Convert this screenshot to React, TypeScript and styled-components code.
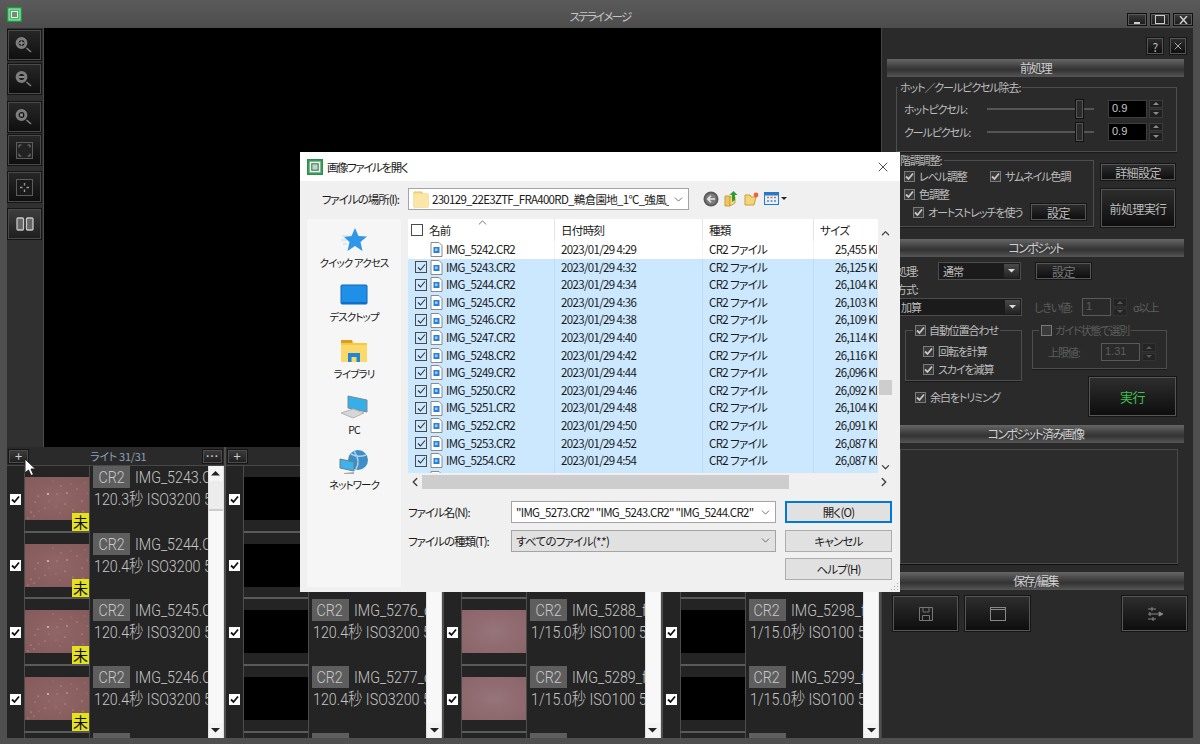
import React from 'react';
import styled, { createGlobalStyle } from 'styled-components';
import { ChevronDown, ChevronLeft, ChevronRight, ChevronUp, X } from 'lucide-react';

const JP = `"Noto Sans CJK JP", "Liberation Sans", sans-serif`;
const THIN = `Roboto, "Noto Sans CJK JP", "Liberation Sans", sans-serif`;

const Global = createGlobalStyle`
  html, body {
    margin: 0;
    width: 1200px;
    height: 744px;
    overflow: hidden;
    background: #4f4f4f;
    font-family: ${JP};
    font-feature-settings: 'palt';
  }
  * { box-sizing: border-box; }
`;

const Window = styled.div`
  position: relative;
  width: 1200px;
  height: 744px;
  background: #4f4f4f;
  display: flex;
  flex-direction: column;
`;

/* ---------- title bar ---------- */

const TitleBar = styled.div`
  height: 28px;
  display: grid;
  grid-template-columns: 1fr auto 1fr;
  background: linear-gradient(#5b5b5b, #4d4d4d);
`;

const AppIcon = styled.svg`
  width: 15px;
  height: 15px;
  margin: 7px 0 0 7px;
`;

const TitleText = styled.div`
  color: #c4c4c4;
  font-size: 11.5px;
  letter-spacing: -1.8px;
  line-height: 33px;
`;

const WinButtons = styled.div`
  display: flex;
  justify-content: flex-end;
  align-items: flex-start;
  gap: 3px;
  padding: 13px 7px 0 0;
`;

const WinButton = styled.div`
  width: 20px;
  height: 13px;
  background: linear-gradient(#3a3a3a, #1c1c1c);
  border: 1px solid #111;
  box-shadow: inset 0 0 0 1px #5a5a5a;
  display: flex;
  align-items: center;
  justify-content: center;
`;

/* ---------- main ---------- */

const Body = styled.div`
  flex: 1;
  display: flex;
  padding: 0 7px 6px 7px;
  min-height: 0;
`;

const LeftColumn = styled.div`
  width: 874px;
  display: flex;
  flex-direction: column;
`;

const ViewerRow = styled.div`
  height: 419px;
  display: flex;
`;

const Toolbar = styled.div`
  width: 37px;
  background: #303030;
  border-right: 1px solid #4a4a4a;
  padding: 1px 0 0 0;
  display: flex;
  flex-direction: column;
`;

const ToolButton = styled.div<{ $gap?: number; $lit?: boolean }>`
  width: 35px;
  height: 32px;
  margin-top: ${(p) => p.$gap ?? 1}px;
  background: ${(p) => (p.$lit ? 'linear-gradient(#3e3e3e, #1e1e1e)' : 'linear-gradient(#282828, #0e0e0e)')};
  border: 1px solid #151515;
  box-shadow: inset 0 0 0 1px #4a4a4a;
  display: flex;
  align-items: center;
  justify-content: center;
`;

const Viewer = styled.div`
  flex: 1;
  background: #000;
`;

const ThumbGrid = styled.div`
  flex: 1;
  display: grid;
  grid-template-columns: repeat(4, 218.5px);
  min-height: 0;
`;

const ThumbColumn = styled.div`
  display: flex;
  flex-direction: column;
  min-width: 0;
  min-height: 0;
  padding-right: 2px;
`;

const ThumbHeader = styled.div`
  height: 18px;
  flex: none;
  background: #2a2a2a;
  display: flex;
  align-items: center;
  padding: 0 1px;
`;

const SmallButton = styled.div`
  width: 21px;
  height: 15px;
  background: linear-gradient(#3d3d3d, #1e1e1e);
  border: 1px solid #161616;
  box-shadow: inset 0 0 0 1px #4c4c4c;
  color: #d0d0d0;
  font-size: 13px;
  line-height: 12px;
  text-align: center;
`;

const ThumbTitle = styled.div`
  flex: 1;
  text-align: center;
  color: #8ea0b8;
  font-size: 11px;
  letter-spacing: -0.3px;
  padding-left: 6px;
`;

const ThumbBody = styled.div`
  flex: 1;
  min-height: 0;
  display: flex;
  background: #242424;
  overflow: hidden;
  border-top: 1px solid #484848;
`;

const ThumbList = styled.div`
  flex: 1;
  min-width: 0;
  overflow: hidden;
`;

const ThumbRow = styled.div`
  height: 66.67px;
  display: grid;
  grid-template-columns: 17px 66px 1fr;
`;

const CheckCell = styled.div`
  display: flex;
  align-items: center;
  justify-content: center;
`;

const WhiteCheck = styled.div`
  width: 11px;
  height: 11px;
  background: #fff;
  display: flex;
  align-items: center;
  justify-content: center;
`;

const ThumbCell = styled.div`
  position: relative;
  border-left: 1px solid #4c4c4c;
  border-right: 1px solid #4c4c4c;
  border-bottom: 2px solid #5a5a5a;
  padding-top: 11px;
`;

const ThumbImage = styled.svg<{ $bg: string }>`
  display: block;
  width: 64px;
  height: 43px;
  background: ${(p) => p.$bg};
`;

const Badge = styled.div`
  position: absolute;
  right: 0;
  bottom: 0;
  width: 17px;
  height: 18px;
  background: #e4e11f;
  color: #111;
  font-size: 15px;
  line-height: 18px;
  text-align: center;
`;

const ThumbInfo = styled.div`
  min-width: 0;
  overflow: hidden;
  padding-left: 3px;
  color: #c4c4c4;
  font-family: ${THIN};
  font-weight: 300;
  font-size: 17px;
  white-space: nowrap;
`;

const InfoTop = styled.div`
  display: flex;
  align-items: center;
  height: 22px;
  gap: 5px;
`;

const FileChip = styled.span`
  flex: none;
  width: 37px;
  height: 22px;
  background: #5e5e5e;
  color: #c8c8c8;
  text-align: center;
  line-height: 22px;
  & > span {
    transform-origin: center;
  }
`;

const ThinText = styled.span`
  display: inline-block;
  transform: scaleX(0.84);
  transform-origin: left center;
`;

const InfoBottom = styled.div`
  padding-left: 1px;
  line-height: 22px;
  height: 22px;
`;

const ThumbScroll = styled.div`
  width: 16px;
  flex: none;
  background: #f8f8f8;
  display: flex;
  flex-direction: column;
  border: 1px solid #e0e0e0;
  border-width: 0 1px;
`;

const ScrollArrow = styled.div`
  height: 15px;
  display: flex;
  align-items: center;
  justify-content: center;
  background: #f4f4f4;
  flex: none;
`;

const ScrollThumb = styled.div`
  height: 30px;
  background: #ececec;
  flex: none;
  border-bottom: 2px solid #ccc;
`;

const ScrollFill = styled.div`
  flex: 1;
`;

/* ---------- right panel ---------- */

const RightPanel = styled.div`
  width: 312px;
  background: #2a2a2a;
  border-left: 1px solid #454545;
  padding: 0 9px 0 5px;
  display: flex;
  flex-direction: column;
  color: #bdbdbd;
  font-size: 11px;
  letter-spacing: -1.1px;
`;

const PanelTop = styled.div`
  height: 31px;
  display: flex;
  justify-content: flex-end;
  align-items: flex-start;
  gap: 5px;
  padding-top: 9px;
  margin-right: -3px;
`;

const DarkButton = styled.div<{ $w?: number; $h?: number; $color?: string; $size?: number }>`
  width: ${(p) => (p.$w ? `${p.$w}px` : 'auto')};
  height: ${(p) => p.$h ?? 18}px;
  flex: none;
  background: linear-gradient(#2e2e2e, #0d0d0d);
  border: 1px solid #161616;
  box-shadow: inset 0 0 0 1px #565656;
  color: ${(p) => p.$color ?? '#bdbdbd'};
  font-size: ${(p) => p.$size ?? 12}px;
  letter-spacing: -0.6px;
  display: flex;
  align-items: center;
  justify-content: center;
`;

const SectionHead = styled.div`
  height: 18px;
  flex: none;
  background: linear-gradient(#666 0%, #3e3e3e 45%, #333 60%, #565656 100%);
  color: #cfcfcf;
  font-size: 12px;
  letter-spacing: -1.6px;
  line-height: 18px;
  text-align: center;
`;

const Group = styled.fieldset<{ $w?: number; $h?: number }>`
  margin: 0;
  padding: 0;
  min-width: 0;
  width: ${(p) => (p.$w ? `${p.$w}px` : 'auto')};
  height: ${(p) => (p.$h ? `${p.$h}px` : 'auto')};
  border: 1px solid #4e4e4e;
  box-shadow: 0 1px 0 #1a1a1a;
`;

const GroupLegend = styled.legend<{ $ml: number }>`
  margin-left: ${(p) => p.$ml}px;
  padding: 0 2px;
  font-size: 11px;
  line-height: 14px;
  white-space: nowrap;
  display: flex;
  align-items: center;
  gap: 3px;
`;

const HotGroup = styled(Group)`
  margin: 3px 0 0 9px;
  padding: 3px 0 0 7px;
`;

const SliderRow = styled.div`
  display: flex;
  align-items: center;
  height: 23px;
`;

const SliderLabel = styled.div`
  width: 83px;
  flex: none;
`;

const SliderTrack = styled.div`
  position: relative;
  width: 107px;
  height: 2px;
  margin-right: 14px;
  background: #555;
  flex: none;
`;

const SliderThumb = styled.div<{ $pos: number }>`
  position: absolute;
  top: -9px;
  left: ${(p) => p.$pos}px;
  width: 9px;
  height: 20px;
  background: #2b2b2b;
  border: 1px solid #111;
  box-shadow: inset 0 0 0 1px #555;
`;

const NumberBox = styled.div<{ $w: number; $dim?: boolean }>`
  width: ${(p) => p.$w}px;
  height: 18px;
  flex: none;
  background: ${(p) => (p.$dim ? '#2a2a2a' : '#000')};
  border: 1px solid ${(p) => (p.$dim ? '#5a5a5a' : '#3e3e3e')};
  color: ${(p) => (p.$dim ? '#5e5e5e' : '#c8c8c8')};
  font-size: 11px;
  letter-spacing: 0;
  line-height: 15px;
  padding-left: 3px;
  font-family: 'Liberation Sans', sans-serif;
`;

const Spinner = styled.div<{ $dim?: boolean }>`
  width: 14px;
  height: 18px;
  margin-left: 2px;
  flex: none;
  display: flex;
  flex-direction: column;
  gap: 1px;
  opacity: ${(p) => (p.$dim ? 0.45 : 1)};
`;

const SpinPart = styled.div`
  flex: 1;
  background: #1e1e1e;
  border: 1px solid #3c3c3c;
  display: flex;
  align-items: center;
  justify-content: center;
`;

const ToneRow = styled.div`
  display: flex;
  gap: 6px;
  margin: 1px 0 0 9px;
  height: 76px;
`;

const ToneGroup = styled(Group)`
  padding: 0 0 0 7px;
`;

const OptionRow = styled.div<{ $indent?: number }>`
  display: flex;
  align-items: center;
  height: 18px;
  padding-left: ${(p) => p.$indent ?? 0}px;
`;

const Option = styled.div<{ $w?: number }>`
  display: flex;
  align-items: center;
  gap: 4px;
  white-space: nowrap;
  width: ${(p) => (p.$w ? `${p.$w}px` : 'auto')};
`;

const DarkCheck = styled.span`
  width: 11px;
  height: 11px;
  flex: none;
  background: #3a3a3a;
  border: 1px solid #7a7a7a;
  display: inline-flex;
  align-items: center;
  justify-content: center;
`;

const ToneButtons = styled.div`
  width: 76px;
  padding-top: 10px;
  display: flex;
  flex-direction: column;
  gap: 7px;
`;

const CompositeBody = styled.div`
  margin: 5px 0 0 9px;
  display: flex;
  flex-direction: column;
`;

const FormRow = styled.div`
  height: 18px;
  display: flex;
  align-items: center;
`;

const FormLabel = styled.div<{ $w?: number; $dim?: boolean; $before?: number }>`
  width: ${(p) => (p.$w ? `${p.$w}px` : 'auto')};
  margin-left: ${(p) => p.$before ?? 0}px;
  color: ${(p) => (p.$dim ? '#5e5e5e' : 'inherit')};
  flex: none;
`;

const DarkSelect = styled.div<{ $w: number }>`
  width: ${(p) => p.$w}px;
  height: 18px;
  flex: none;
  background: #1b1b1b;
  border: 1px solid #4c4c4c;
  display: flex;
  align-items: center;
  justify-content: space-between;
  padding: 0 1px 0 4px;
`;

const SelectArrow = styled.div`
  width: 15px;
  height: 14px;
  background: linear-gradient(#4a4a4a, #222);
  display: flex;
  align-items: center;
  justify-content: center;
`;

const DimButton = styled(DarkButton)`
  margin-left: 14px;
`;

const AlignRow = styled.div`
  margin-top: 7px;
  display: grid;
  grid-template-columns: 117px 145px;
  column-gap: 10px;
  padding-left: 9px;
`;

const AlignLeft = styled.div`
  display: flex;
  flex-direction: column;
`;

const AlignRight = styled.div`
  display: flex;
  flex-direction: column;
  align-items: flex-end;
`;

const AutoGroup = styled(Group)`
  padding: 5px 0 0 17px;
`;

const TrimOption = styled(Option)`
  margin: 7px 0 0 10px;
  height: 18px;
`;

const GuideGroup = styled(Group)`
  width: 135px;
  margin-right: 10px;
  padding: 6px 0 0 15px;
`;

const RunButton = styled(DarkButton)`
  margin-top: 7px;
`;

const HeadGap = styled.div<{ $h: number }>`
  height: ${(p) => p.$h}px;
  flex: none;
`;

const CompositeBox = styled.div`
  height: 115px;
  margin: 6px 6px 8px 13px;
  flex: none;
  background: #2c2c2c;
  border: 1px solid #4a4a4a;
  box-shadow: 0 1px 0 #111;
`;

const SaveRow = styled.div`
  display: flex;
  gap: 5px;
  margin: 5px -4px 0 5px;
`;

const SaveSpacer = styled.div`
  flex: 1;
`;

/* ---------- file dialog ---------- */

const Dialog = styled.div`
  position: absolute;
  left: 300px;
  top: 152px;
  width: 600px;
  height: 440px;
  background: #f0f0f0;
  color: #1a1a1a;
  font-size: 11.5px;
  display: flex;
  flex-direction: column;
`;

const DialogTitle = styled.div`
  height: 29px;
  flex: none;
  background: #fff;
  display: flex;
  align-items: center;
  padding: 0 9px 0 7px;
  gap: 4px;
`;

const DialogTitleText = styled.div`
  flex: 1;
  letter-spacing: -1.4px;
`;

const DialogBody = styled.div`
  flex: 1;
  padding: 7px 7px 0 7px;
  display: flex;
  flex-direction: column;
  min-height: 0;
`;

const LocationRow = styled.div`
  height: 22px;
  display: flex;
  align-items: center;
`;

const LocationLabel = styled.div`
  width: 92px;
  margin-right: 9px;
  text-align: right;
  letter-spacing: -1px;
  white-space: nowrap;
`;

const Combo = styled.div<{ $w?: number; $grey?: boolean }>`
  width: ${(p) => (p.$w ? `${p.$w}px` : 'auto')};
  height: 22px;
  background: ${(p) => (p.$grey ? '#e1e1e1' : '#fff')};
  border: 1px solid #a4a4a4;
  display: flex;
  align-items: center;
  padding: 0 3px 0 4px;
  gap: 3px;
  letter-spacing: -0.7px;
  overflow: hidden;
  white-space: nowrap;
`;

const ComboText = styled.div`
  flex: 1;
  overflow: hidden;
  min-width: 0;
`;

const NavIcons = styled.div`
  display: flex;
  align-items: center;
  gap: 5px;
  margin-left: 14px;
`;

const DialogMain = styled.div`
  margin-top: 9px;
  display: grid;
  grid-template-columns: 94px 485px;
  column-gap: 7px;
  height: 368px;
`;

const Sidebar = styled.div`
  background: #f6f6f6;
  padding-top: 9px;
`;

const SideItem = styled.div`
  height: 55.5px;
  display: flex;
  flex-direction: column;
  align-items: center;
  justify-content: flex-start;
  gap: 3px;
  font-size: 10.5px;
  letter-spacing: -0.9px;
`;

const FileArea = styled.div`
  display: flex;
  flex-direction: column;
`;

const ListRow = styled.div`
  display: flex;
  height: 254px;
`;

const FileList = styled.div`
  position: relative;
  width: 470px;
  background: #fff;
  overflow: hidden;
`;

const ListGrid = styled.div<{ $selected?: boolean; $head?: boolean }>`
  display: grid;
  grid-template-columns: 147px 148px 111px 64px;
  height: ${(p) => (p.$head ? '22px' : '17.6px')};
  background: ${(p) => (p.$selected ? '#cce8ff' : '#fff')};
  align-items: stretch;
  line-height: ${(p) => (p.$head ? '22px' : '17.6px')};
  letter-spacing: -0.65px;
  white-space: nowrap;
`;

const ListCell = styled.div<{ $line: string; $indent?: number }>`
  border-right: 1px solid ${(p) => p.$line};
  padding-left: ${(p) => p.$indent ?? 6}px;
  overflow: hidden;
  display: flex;
  align-items: center;
  gap: 3px;
`;

const SortMark = styled.div`
  position: absolute;
  left: 68px;
  top: -3px;
  color: #555;
  line-height: 0;
`;

const HeadName = styled.span`
  margin-left: 3px;
`;

const LightCheck = styled.div<{ $checked?: boolean }>`
  width: 12px;
  height: 12px;
  flex: none;
  border: 1px solid #4a4a4a;
  background: ${(p) => (p.$checked ? 'transparent' : '#fff')};
  display: flex;
  align-items: center;
  justify-content: center;
`;

const CheckSpacer = styled.div`
  width: 12px;
  flex: none;
`;

const VScroll = styled.div`
  width: 15px;
  display: flex;
  flex-direction: column;
  align-items: center;
  background: #f0f0f0;
  padding-top: 8px;
  color: #444;
`;

const VThumb = styled.div`
  width: 13px;
  height: 15px;
  background: #cdcdcd;
  margin-top: 141px;
  margin-bottom: 66px;
`;

const HScroll = styled.div`
  height: 15px;
  margin-top: 1px;
  display: flex;
  align-items: center;
  color: #444;
`;

const HThumb = styled.div`
  width: 367px;
  height: 14px;
  background: #cdcdcd;
  margin-right: 88px;
`;

const DialogForm = styled.div`
  margin-top: 12px;
  display: grid;
  grid-template-columns: 103px 265px 116px;
  grid-auto-rows: 22px;
  row-gap: 6.5px;
  align-items: center;
`;

const FormText = styled.div`
  letter-spacing: -1px;
  white-space: nowrap;
`;

const DialogButton = styled.div<{ $primary?: boolean }>`
  height: 22px;
  margin-left: 9px;
  background: #e1e1e1;
  border: ${(p) => (p.$primary ? '2px solid #0078d7' : '1px solid #adadad')};
  letter-spacing: -0.8px;
  display: flex;
  align-items: center;
  justify-content: center;
`;

const FormBlank = styled.div`
  grid-column: span 2;
`;

const Grip = styled.svg`
  position: absolute;
  right: 1px;
  bottom: 1px;
`;

const Cursor = styled.svg`
  position: absolute;
  left: 24px;
  top: 458px;
`;

/* ---------- drawings ---------- */

const Tick = ({ color = '#111', weight = 1.8 }: { color?: string; weight?: number }) => (
  <svg width="9" height="9" viewBox="0 0 9 9">
    <path d="M1 4.5 L3.5 7 L8 1.5" fill="none" stroke={color} strokeWidth={weight} />
  </svg>
);

const Lens = ({ mode }: { mode: 'plus' | 'minus' | 'dot' }) => (
  <svg width="22" height="20" viewBox="0 0 22 20">
    <circle cx="7.5" cy="8" r="4.4" fill="#101010" stroke="#7e7e7e" strokeWidth="3" />
    <path d="M12.5 13 L17 17" stroke="#7e7e7e" strokeWidth="1.6" />
    {mode === 'plus' && <path d="M5 8 H10 M7.5 5.5 V10.5" stroke="#8c8c8c" strokeWidth="1.6" />}
    {mode === 'minus' && <path d="M4.5 8 H10.5" stroke="#8c8c8c" strokeWidth="2.2" />}
    {mode === 'dot' && <rect x="6" y="6.5" width="3" height="3" fill="#8c8c8c" />}
  </svg>
);

const FitIcon = () => (
  <svg width="17" height="17" viewBox="0 0 17 17">
    <rect x=".5" y=".5" width="16" height="16" fill="#222" stroke="#5c5c5c" />
    <path d="M3 5.5 V3 H5.5 M11.5 3 H14 V5.5 M14 11.5 V14 H11.5 M5.5 14 H3 V11.5" fill="none" stroke="#7a7a7a" />
  </svg>
);

const ActualIcon = () => (
  <svg width="17" height="17" viewBox="0 0 17 17">
    <rect x=".5" y=".5" width="16" height="16" fill="#1a1a1a" stroke="#5c5c5c" />
    <path d="M8.5 4 V6.5 M8.5 10.5 V13 M4 8.5 H6.5 M10.5 8.5 H13" stroke="#999" strokeWidth="1.4" />
  </svg>
);

const SplitIcon = () => (
  <svg width="18" height="14" viewBox="0 0 18 14">
    <rect x="1" y="1" width="6.5" height="12" rx="1" fill="#666" stroke="#c8c8c8" strokeWidth="1.3" />
    <rect x="10.5" y="1" width="6.5" height="12" rx="1" fill="#666" stroke="#c8c8c8" strokeWidth="1.3" />
  </svg>
);

const DialogFrameIcon = () => (
  <svg width="16" height="16" viewBox="0 0 15 15">
    <rect width="15" height="15" fill="#2f8f50" />
    <rect x="2" y="2" width="11" height="11" fill="#e9f3ec" stroke="#58a673" />
    <rect x="4.5" y="4.5" width="6" height="6" fill="#c5d2c8" stroke="#3a7a52" />
  </svg>
);

const FileIcon = () => (
  <svg width="13" height="15" viewBox="0 0 13 15">
    <path d="M1 .5 H9 L12 3.5 V14.5 H1 Z" fill="#fff" stroke="#8a8a8a" />
    <rect x="3.5" y="5" width="6" height="6" fill="#2a7fd8" />
    <rect x="5" y="6.5" width="2.5" height="2.5" fill="#9fd0f7" />
  </svg>
);

const FolderIcon = () => (
  <svg width="16" height="18" viewBox="0 0 16 18">
    <path d="M1 2 H9 V4 H15 V17 H1 Z" fill="#fbdc85" stroke="#e3c56c" />
    <rect x="1" y="4" width="14" height="13" fill="#fbe6a6" />
  </svg>
);

const BackIcon = () => (
  <svg width="16" height="16" viewBox="0 0 16 16">
    <circle cx="8" cy="8" r="7.5" fill="#5a5a5a" />
    <circle cx="8" cy="8" r="5.5" fill="#7d7d7d" />
    <path d="M12 8 H5 M8 4.8 L4.8 8 L8 11.2" fill="none" stroke="#e6e6e6" strokeWidth="1.6" />
  </svg>
);

const UpIcon = () => (
  <svg width="15" height="16" viewBox="0 0 15 16">
    <path d="M1 5 H6 V15 H1 Z" fill="#edc75e" stroke="#c9a03f" />
    <path d="M6 15 L11 12 V6 H6 Z" fill="#f5dc8a" stroke="#c9a03f" />
    <path d="M8 11 V4 H5.5 L9.5 0 L13.5 4 H11 V9 Z" fill="#2f9e2f" />
  </svg>
);

const NewFolderIcon = () => (
  <svg width="15" height="14" viewBox="0 0 15 14">
    <path d="M1 3 H6 L7 5 H12 L10 13 H1 Z" fill="#f3d476" stroke="#c9a03f" />
    <circle cx="12" cy="3" r="2.4" fill="#e8653a" />
  </svg>
);

const ViewIcon = () => (
  <svg width="24" height="14" viewBox="0 0 24 14">
    <rect x=".5" y=".5" width="14" height="12" fill="#e8f1fb" stroke="#2a76c9" />
    <rect x="1" y="1" width="13" height="2.5" fill="#2a76c9" />
    <path d="M3 5.5 H5 M6.5 5.5 H8.5 M10 5.5 H12" stroke="#d27b33" strokeWidth="1.6" />
    <path d="M3 9 H5 M6.5 9 H8.5 M10 9 H12" stroke="#4a8bd0" strokeWidth="1.6" />
    <path d="M17 5 H23 L20 8 Z" fill="#222" />
  </svg>
);

const StarIcon = () => (
  <svg width="28" height="24" viewBox="0 0 28 24">
    <path d="M2 8 H8 M1 12 H7 M3 16 H7" stroke="#b9dcf7" strokeWidth="1" />
    <path d="M15 0 L18.5 8 L27 8.5 L20.5 14 L22.5 23 L15 18 L7.5 23 L9.5 14 L4 9 L11.5 8 Z" fill="#2f97e8" />
  </svg>
);

const DesktopIcon = () => (
  <svg width="28" height="22" viewBox="0 0 28 22">
    <rect x="1" y="1" width="26" height="19" rx="1" fill="#1f8fe8" stroke="#0d66b8" />
    <rect x="2" y="18" width="24" height="2" fill="#0e70c4" />
  </svg>
);

const LibraryIcon = () => (
  <svg width="28" height="24" viewBox="0 0 28 24">
    <path d="M1 1 H12 L14 4 H27 V23 H1 Z" fill="#f6c945" />
    <rect x="1" y="6" width="26" height="17" fill="#fbd968" />
    <rect x="1" y="1" width="11" height="3" fill="#d99f22" />
    <path d="M8 23 V14 H20 V23 H16.5 V18 H11.5 V23 Z" fill="#1f86d8" />
  </svg>
);

const PcIcon = () => (
  <svg width="30" height="24" viewBox="0 0 30 24">
    <path d="M9 1 L28 5 V17 L9 13 Z" fill="#36aee8" stroke="#7a8a95" />
    <path d="M2 18 L14 14 L25 18 L14 23 Z" fill="#d6d6d6" stroke="#b4b4b4" />
  </svg>
);

const NetworkIcon = () => (
  <svg width="30" height="24" viewBox="0 0 30 24">
    <circle cx="19" cy="10" r="10" fill="#3f8fc4" />
    <path d="M12 4 Q19 8 27 5 M15 1 Q22 11 17 19" fill="none" stroke="#a8d3ee" strokeWidth="1.5" />
    <path d="M1 9 L15 12 V21 L1 18 Z" fill="#3eb2ea" stroke="#6d7d88" />
    <path d="M5 23 L15 22 V24 L5 24 Z" fill="#aaa" />
  </svg>
);

const starDots: [number, number, number][] = [
  [23, 17, 1.1], [13, 19, 0.6], [32, 17, 0.5], [10, 25, 0.5], [20, 31, 0.5], [28, 4, 0.4],
  [36, 9, 0.5], [42, 16, 0.7], [46, 7, 0.4], [52, 12, 0.5], [57, 24, 0.6], [40, 27, 0.6],
  [48, 33, 0.5], [58, 34, 0.5], [35, 36, 0.4], [6, 35, 0.6], [9, 39, 0.5], [14, 34, 0.4],
  [3, 41, 0.5], [24, 24, 0.4], [60, 6, 0.4], [51, 39, 0.4], [31, 30, 0.4], [62, 16, 0.4],
];

const Stars = ({ bg }: { bg: string }) => (
  <ThumbImage $bg={bg} viewBox="0 0 64 43">
    {starDots.map(([x, y, r]) => (
      <circle key={`${x}-${y}`} cx={x} cy={y} r={r} fill="#d8bfb9" />
    ))}
  </ThumbImage>
);

const Tri = ({ up, color = '#222', size = 9 }: { up?: boolean; color?: string; size?: number }) => (
  <svg width={size} height={size / 2} viewBox="0 0 9 4.5">
    <path d={up ? 'M0 4.5 H9 L4.5 0 Z' : 'M0 0 H9 L4.5 4.5 Z'} fill={color} />
  </svg>
);

const Spin = ({ dim }: { dim?: boolean }) => (
  <Spinner $dim={dim}>
    <SpinPart><Tri up color="#8c8c8c" size={6} /></SpinPart>
    <SpinPart><Tri color="#8c8c8c" size={6} /></SpinPart>
  </Spinner>
);

const Opt = ({ label, w, checked = true }: { label: string; w?: number; checked?: boolean }) => (
  <Option $w={w}>
    <DarkCheck>{checked && <Tick color="#c8c8c8" />}</DarkCheck>
    {label}
  </Option>
);

/* ---------- data ---------- */

type ThumbData = { name: string; info: string; kind: 'light' | 'dark' | 'flat' };

const makeRows = (start: number, suffix: string, info: string, kind: ThumbData['kind']): ThumbData[] =>
  [0, 1, 2, 3, 4].map((i) => ({ name: `IMG_${start + i}${suffix}`, info, kind }));

const thumbColumns: { rows: ThumbData[]; head?: boolean }[] = [
  {
    head: true,
    rows: makeRows(5243, '.CR2', '120.4秒 ISO3200 5', 'light').map((r, i) =>
      i === 0 ? { ...r, info: '120.3秒 ISO3200 5' } : r
    ),
  },
  { rows: makeRows(5274, '_dark.CR2', '120.4秒 ISO3200 5', 'dark') },
  { rows: makeRows(5286, '_flat.CR2', '1/15.0秒 ISO100 5', 'flat') },
  { rows: makeRows(5296, '_flatdark.CR2', '1/15.0秒 ISO100 5', 'dark') },
];

const files: [string, string, string][] = [
  ['5243', '4:32', '26,125'],
  ['5244', '4:34', '26,104'],
  ['5245', '4:36', '26,103'],
  ['5246', '4:38', '26,109'],
  ['5247', '4:40', '26,114'],
  ['5248', '4:42', '26,116'],
  ['5249', '4:44', '26,096'],
  ['5250', '4:46', '26,092'],
  ['5251', '4:48', '26,104'],
  ['5252', '4:50', '26,091'],
  ['5253', '4:52', '26,087'],
  ['5254', '4:54', '26,087'],
  ['5255', '4:56', '26,090'],
];

const FileRow = ({ id, time, size, selected }: { id: string; time: string; size: string; selected: boolean }) => {
  const line = selected ? '#b9dcfa' : '#f4f4f4';
  return (
    <ListGrid $selected={selected}>
      <ListCell $line={line} $indent={7}>
        {selected ? <LightCheck $checked><Tick color="#333" weight={1.1} /></LightCheck> : <CheckSpacer />}
        <FileIcon />
        <span>IMG_{id}.CR2</span>
      </ListCell>
      <ListCell $line={line}>2023/01/29 {time}</ListCell>
      <ListCell $line={line}>CR2 ファイル</ListCell>
      <ListCell $line="transparent" $indent={21}>{size} KB</ListCell>
    </ListGrid>
  );
};

export default function App() {
  return (
    <Window>
      <Global />
      <TitleBar>
        <AppIcon viewBox="0 0 15 15">
          <rect width="15" height="15" fill="#1c9a3e" />
          <rect x="2" y="2" width="11" height="11" fill="#3dbb5e" stroke="#bfe9c9" />
          <rect x="4.5" y="4.5" width="6" height="6" fill="#77897c" stroke="#e8f5ea" />
        </AppIcon>
        <TitleText>ステライメージ</TitleText>
        <WinButtons>
          <WinButton>
            <svg width="8" height="8"><rect x="1" y="6" width="6" height="2" fill="#ccc" /></svg>
          </WinButton>
          <WinButton>
            <svg width="10" height="9"><rect x=".5" y=".5" width="9" height="8" fill="none" stroke="#ccc" /></svg>
          </WinButton>
          <WinButton>
            <svg width="9" height="8"><path d="M1 0 L8 8 M8 0 L1 8" stroke="#ccc" strokeWidth="1.5" /></svg>
          </WinButton>
        </WinButtons>
      </TitleBar>
      <Body>
        <LeftColumn>
          <ViewerRow>
            <Toolbar>
              <ToolButton $gap={0}><Lens mode="plus" /></ToolButton>
              <ToolButton $gap={2}><Lens mode="minus" /></ToolButton>
              <ToolButton $gap={6}><Lens mode="dot" /></ToolButton>
              <ToolButton $gap={1}><FitIcon /></ToolButton>
              <ToolButton $gap={5}><ActualIcon /></ToolButton>
              <ToolButton $gap={5} $lit><SplitIcon /></ToolButton>
            </Toolbar>
            <Viewer />
          </ViewerRow>
          <ThumbGrid>
            {thumbColumns.map((col, c) => (
              <ThumbColumn key={c}>
                <ThumbHeader>
                  <SmallButton>+</SmallButton>
                  {col.head && <ThumbTitle>ライト 31/31</ThumbTitle>}
                  {col.head && <SmallButton>…</SmallButton>}
                </ThumbHeader>
                <ThumbBody>
                  <ThumbList>
                    {col.rows.map((row) => (
                      <ThumbRow key={row.name}>
                        <CheckCell><WhiteCheck><Tick /></WhiteCheck></CheckCell>
                        <ThumbCell>
                          {row.kind === 'light' && <Stars bg="radial-gradient(#906666, #845a5a)" />}
                          {row.kind === 'dark' && <ThumbImage $bg="#000" />}
                          {row.kind === 'flat' && <ThumbImage $bg="radial-gradient(#96747a, #8a6468)" />}
                          {row.kind === 'light' && <Badge>未</Badge>}
                        </ThumbCell>
                        <ThumbInfo>
                          <InfoTop>
                            <FileChip><ThinText>CR2</ThinText></FileChip>
                            <ThinText>{row.name}</ThinText>
                          </InfoTop>
                          <InfoBottom><ThinText>{row.info}</ThinText></InfoBottom>
                        </ThumbInfo>
                      </ThumbRow>
                    ))}
                  </ThumbList>
                  <ThumbScroll>
                    <ScrollArrow><Tri up /></ScrollArrow>
                    <ScrollThumb />
                    <ScrollFill />
                    <ScrollArrow><Tri /></ScrollArrow>
                  </ThumbScroll>
                </ThumbBody>
              </ThumbColumn>
            ))}
          </ThumbGrid>
        </LeftColumn>

        <RightPanel>
          <PanelTop>
            <DarkButton $w={18}>?</DarkButton>
            <DarkButton $w={18}><X size={12} color="#aaa" /></DarkButton>
          </PanelTop>
          <SectionHead>前処理</SectionHead>
          <HotGroup $w={281} $h={72}>
            <GroupLegend $ml={-6}>ホット／クールピクセル除去:</GroupLegend>
            <SliderRow>
              <SliderLabel>ホットピクセル:</SliderLabel>
              <SliderTrack><SliderThumb $pos={88} /></SliderTrack>
              <NumberBox $w={39}>0.9</NumberBox>
              <Spin />
            </SliderRow>
            <SliderRow>
              <SliderLabel>クールピクセル:</SliderLabel>
              <SliderTrack><SliderThumb $pos={88} /></SliderTrack>
              <NumberBox $w={39}>0.9</NumberBox>
              <Spin />
            </SliderRow>
          </HotGroup>
          <ToneRow>
            <ToneGroup $w={198} $h={74}>
              <GroupLegend $ml={-6}>階調調整:</GroupLegend>
              <OptionRow>
                <Opt label="レベル調整" w={86} />
                <Opt label="サムネイル色調" />
              </OptionRow>
              <OptionRow><Opt label="色調整" /></OptionRow>
              <OptionRow $indent={9}>
                <Opt label="オートストレッチを使う" w={117} />
                <DarkButton $w={57}>設定</DarkButton>
              </OptionRow>
            </ToneGroup>
            <ToneButtons>
              <DarkButton $h={18}>詳細設定</DarkButton>
              <DarkButton $h={40}>前処理実行</DarkButton>
            </ToneButtons>
          </ToneRow>
          <HeadGap $h={10} />
          <SectionHead>コンポジット</SectionHead>
          <CompositeBody>
            <FormRow>
              <FormLabel $w={42}>処理:</FormLabel>
              <DarkSelect $w={83}>通常<SelectArrow><Tri color="#ddd" size={7} /></SelectArrow></DarkSelect>
              <DimButton $w={57} $color="#777">設定</DimButton>
            </FormRow>
            <FormRow>方式:</FormRow>
            <FormRow>
              <DarkSelect $w={126}>加算<SelectArrow><Tri color="#ddd" size={7} /></SelectArrow></DarkSelect>
              <FormLabel $w={48} $dim $before={12}>しきい値:</FormLabel>
              <NumberBox $w={29} $dim>1</NumberBox>
              <Spin dim />
              <FormLabel $dim $before={6}>σ以上</FormLabel>
            </FormRow>
            <AlignRow>
              <AlignLeft>
                <AutoGroup $h={58}>
                  <GroupLegend $ml={-10}>
                    <DarkCheck><Tick color="#c8c8c8" /></DarkCheck>自動位置合わせ
                  </GroupLegend>
                  <OptionRow><Opt label="回転を計算" /></OptionRow>
                  <OptionRow><Opt label="スカイを減算" /></OptionRow>
                </AutoGroup>
                <TrimOption>
                  <DarkCheck><Tick color="#c8c8c8" /></DarkCheck>余白をトリミング
                </TrimOption>
              </AlignLeft>
              <AlignRight>
                <GuideGroup $h={46}>
                  <GroupLegend $ml={-9}>
                    <DarkCheck />
                    <FormLabel $dim>ガイド状態で選別</FormLabel>
                  </GroupLegend>
                  <FormRow>
                    <FormLabel $w={53} $dim>上限値:</FormLabel>
                    <NumberBox $w={39} $dim>1.31</NumberBox>
                    <Spin dim />
                  </FormRow>
                </GuideGroup>
                <RunButton $w={89} $h={41} $color="#3fc24f" $size={13}>実行</RunButton>
              </AlignRight>
            </AlignRow>
          </CompositeBody>
          <HeadGap $h={8} />
          <SectionHead>コンポジット済み画像</SectionHead>
          <CompositeBox />
          <SectionHead>保存/編集</SectionHead>
          <SaveRow>
            <DarkButton $w={67} $h={37}>
              <svg width="16" height="16" viewBox="0 0 16 16" fill="none" stroke="#777">
                <path d="M1.5 1.5 H14.5 V14.5 H1.5 Z M5 1.5 V6 H11 V1.5 M4.5 14.5 V9.5 H11.5 V14.5" />
              </svg>
            </DarkButton>
            <DarkButton $w={67} $h={37}>
              <svg width="16" height="14" viewBox="0 0 16 14" fill="none" stroke="#888">
                <rect x=".5" y=".5" width="15" height="13" />
                <path d="M.5 2.5 H15.5" />
              </svg>
            </DarkButton>
            <SaveSpacer />
            <DarkButton $w={67} $h={37}>
              <svg width="16" height="14" viewBox="0 0 16 14" stroke="#888" fill="none">
                <path d="M1 2 H9 M1 7 H11 M1 12 H9 M5 0 V4 M3 5 V9 M6 10 V14" />
                <path d="M12 5 L16 7 L12 9 Z" fill="#888" />
              </svg>
            </DarkButton>
          </SaveRow>
        </RightPanel>
      </Body>

      <Dialog>
        <DialogTitle>
          <DialogFrameIcon />
          <DialogTitleText>画像ファイルを開く</DialogTitleText>
          <X size={16} strokeWidth={1.2} color="#222" />
        </DialogTitle>
        <DialogBody>
          <LocationRow>
            <LocationLabel>ファイルの場所(I):</LocationLabel>
            <Combo $w={281}>
              <FolderIcon />
              <ComboText>230129_22E3ZTF_FRA400RD_鵜倉園地_1°C_強風_無</ComboText>
              <ChevronDown size={13} strokeWidth={1.5} color="#555" />
            </Combo>
            <NavIcons>
              <BackIcon />
              <UpIcon />
              <NewFolderIcon />
              <ViewIcon />
            </NavIcons>
          </LocationRow>
          <DialogMain>
            <Sidebar>
              <SideItem><StarIcon />クイック アクセス</SideItem>
              <SideItem><DesktopIcon />デスクトップ</SideItem>
              <SideItem><LibraryIcon />ライブラリ</SideItem>
              <SideItem><PcIcon />PC</SideItem>
              <SideItem><NetworkIcon />ネットワーク</SideItem>
            </Sidebar>
            <FileArea>
              <ListRow>
                <FileList>
                  <SortMark><ChevronUp size={13} strokeWidth={1.5} /></SortMark>
                  <ListGrid $head>
                    <ListCell $line="#e5e5e5" $indent={3}>
                      <LightCheck />
                      <HeadName>名前</HeadName>
                    </ListCell>
                    <ListCell $line="#e5e5e5">日付時刻</ListCell>
                    <ListCell $line="#e5e5e5">種類</ListCell>
                    <ListCell $line="transparent">サイズ</ListCell>
                  </ListGrid>
                  <FileRow id="5242" time="4:29" size="25,455" selected={false} />
                  {files.map(([id, time, size]) => (
                    <FileRow key={id} id={id} time={time} size={size} selected />
                  ))}
                </FileList>
                <VScroll>
                  <ChevronUp size={13} strokeWidth={2.5} />
                  <VThumb />
                  <ChevronDown size={13} strokeWidth={2.5} />
                </VScroll>
              </ListRow>
              <HScroll>
                <ChevronLeft size={14} strokeWidth={2.5} />
                <HThumb />
                <ChevronRight size={14} strokeWidth={2.5} />
              </HScroll>
              <DialogForm>
                <FormText>ファイル名(N):</FormText>
                <Combo>
                  <ComboText>"IMG_5273.CR2" "IMG_5243.CR2" "IMG_5244.CR2" "</ComboText>
                  <ChevronDown size={13} strokeWidth={1.5} color="#555" />
                </Combo>
                <DialogButton $primary>開く(O)</DialogButton>
                <FormText>ファイルの種類(T):</FormText>
                <Combo $grey>
                  <ComboText>すべてのファイル(*.*)</ComboText>
                  <ChevronDown size={13} strokeWidth={1.5} color="#555" />
                </Combo>
                <DialogButton>キャンセル</DialogButton>
                <FormBlank />
                <DialogButton>ヘルプ(H)</DialogButton>
              </DialogForm>
            </FileArea>
          </DialogMain>
        </DialogBody>
        <Grip width="9" height="9" viewBox="0 0 9 9">
          <path d="M7 1h1v1H7zM4 4h1v1H4zM7 4h1v1H7zM1 7h1v1H1zM4 7h1v1H4zM7 7h1v1H7z" fill="#aaa" />
        </Grip>
      </Dialog>

      <Cursor width="13" height="19" viewBox="0 0 13 19">
        <path d="M1 1 V15 L4.5 12 L7 17.5 L9.5 16.5 L7 11 H11.5 Z" fill="#fff" stroke="#222" strokeWidth="1" />
      </Cursor>
    </Window>
  );
}
